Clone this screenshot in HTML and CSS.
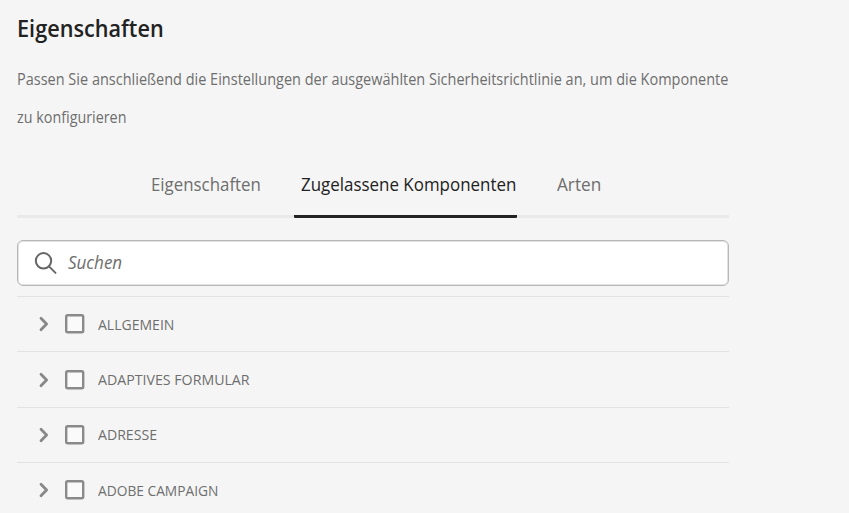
FILE: index.html
```html
<!DOCTYPE html>
<html lang="de">
<head>
<meta charset="utf-8">
<title>Eigenschaften</title>
<link rel="stylesheet" href="styles.css">
</head>
<body>
<main class="panel">
  <h1 class="title"><span>Eigenschaften</span></h1>
  <p class="intro"><span class="intro-first">Passen Sie anschließend die Einstellungen der ausgewählten Sicherheitsrichtlinie an, um die Komponente</span><br><span class="intro-last">zu konfigurieren</span></p>
  <nav class="tabs">
    <a class="tab tab-properties"><span>Eigenschaften</span></a>
    <a class="tab tab-allowed active"><span>Zugelassene Komponenten</span></a>
    <a class="tab tab-styles"><span>Arten</span></a>
  </nav>
  <div class="search">
    <svg class="search-icon" viewBox="0 0 24 24"><circle cx="9.5" cy="9.8" r="7.7"/><path d="M15 15.4 21.5 21.9"/></svg>
    <span class="placeholder">Suchen</span>
  </div>
  <ul class="groups">
    <li class="group"><svg class="chevron" viewBox="0 0 10 16"><path d="M2 2.2 7.6 8 2 13.8"/></svg><svg class="checkbox" viewBox="0 0 20 20"><rect x="1.2" y="1.2" width="17" height="17" rx="1.5"/></svg><span class="label general">ALLGEMEIN</span></li>
    <li class="group"><svg class="chevron" viewBox="0 0 10 16"><path d="M2 2.2 7.6 8 2 13.8"/></svg><svg class="checkbox" viewBox="0 0 20 20"><rect x="1.2" y="1.2" width="17" height="17" rx="1.5"/></svg><span class="label form">ADAPTIVES FORMULAR</span></li>
    <li class="group"><svg class="chevron" viewBox="0 0 10 16"><path d="M2 2.2 7.6 8 2 13.8"/></svg><svg class="checkbox" viewBox="0 0 20 20"><rect x="1.2" y="1.2" width="17" height="17" rx="1.5"/></svg><span class="label address">ADRESSE</span></li>
    <li class="group"><svg class="chevron" viewBox="0 0 10 16"><path d="M2 2.2 7.6 8 2 13.8"/></svg><svg class="checkbox" viewBox="0 0 20 20"><rect x="1.2" y="1.2" width="17" height="17" rx="1.5"/></svg><span class="label campaign">ADOBE CAMPAIGN</span></li>
  </ul>
</main>
</body>
</html>
```
FILE: styles.css
```css
* { box-sizing: border-box; }
html, body { height: 100%; }
body {
  margin: 0;
  overflow: hidden;
  background: #f5f5f5;
  color: #6e6e6e;
  font-family: "Open Sans", "Noto Sans", sans-serif;
}
.panel { width: 712px; margin-left: 17px; padding-top: 10px; }

/* Narrowed text */
.title span, .intro span, .tab span, .placeholder, .label {
  display: inline-block;
  transform-origin: 0 50%;
}
.title span { transform: scaleX(.963); }
.intro .intro-first { transform: scaleX(.935); }
.intro .intro-last { transform: scaleX(.925); }
.tab-properties span { transform: scaleX(.922); }
.tab-allowed span { transform: scaleX(.926); }
.tab-styles span { transform: scaleX(.94); }
.placeholder { transform: scaleX(.945); }
.general { transform: scaleX(.935); }
.form { transform: scaleX(.945); }
.address { transform: scaleX(.94); }
.campaign { transform: scaleX(.917); }

.title { margin: 0; height: 38px; line-height: 38px; font-size: 22.5px; font-weight: 600; color: #222; white-space: nowrap; }
.intro { margin: 12px 0 0; font-size: 15.5px; line-height: 38px; white-space: nowrap; }
.tabs {
  display: flex;
  height: 82px;
  padding: 29px 0 0 127px;
  border-bottom: 3px solid #e9e9e9;
  font-size: 18.3px;
  line-height: 38px;
  white-space: nowrap;
}
.tab { height: 53px; }
.tab-properties { width: 150px; padding-left: 7px; }
.tab-allowed { width: 223px; padding-left: 7px; }
.tab-styles { margin-left: 40px; }
.active { color: #222; border-bottom: 3px solid #222; border-radius: 1px; }
.search {
  display: flex;
  align-items: center;
  height: 46px;
  margin-top: 22px;
  padding-left: 16px;
  background: #fff;
  border: 1px solid #b8b8b8;
  border-radius: 6px;
  box-shadow: inset 0 0 0 1px #e2e2e2;
}
.search-icon { width: 24px; height: 24px; fill: none; stroke: #666; stroke-width: 2; stroke-linecap: round; }
.placeholder { margin: -3px 0 0 10px; font-size: 18px; font-style: italic; }
.groups { list-style: none; margin: 10px 0 0; padding: 0; }
.group { display: flex; align-items: center; height: 55.4px; border-top: 1px solid #e2e2e2; }
.chevron { width: 10px; height: 16px; margin-left: 22px; fill: none; stroke: #888; stroke-width: 2.8; stroke-linecap: round; stroke-linejoin: round; }
.checkbox { width: 20px; height: 20px; margin-left: 16px; fill: #fafafa; stroke: #8a8a8a; stroke-width: 2.4; }
.label { margin: -1px 0 0 13px; font-size: 15px; white-space: nowrap; }
```
